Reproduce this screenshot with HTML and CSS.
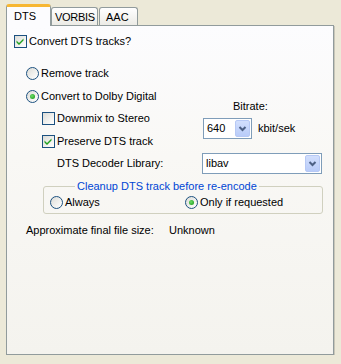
FILE: index.html
```html
<!DOCTYPE html>
<html>
<head>
<meta charset="utf-8">
<link rel="stylesheet" href="styles.css">
</head>
<body>
<div class="window">
  <div class="tabs">
    <div class="tab active">DTS</div>
    <div class="tab tab-narrow">VORBIS</div>
    <div class="tab">AAC</div>
  </div>
  <div class="panel">
    <div class="row r-convert"><span class="cb"><svg viewBox="0 0 11 11" width="11" height="11"><path d="M1.5 4.5 L4 7 L8.5 2.5 L8.5 4.5 L4 9 L1.5 6.5 Z" fill="#21A121"/></svg></span><span>Convert DTS tracks?</span></div>
    <div class="row r-remove"><span class="rb"></span><span>Remove track</span></div>
    <div class="row r-dolby"><span class="rb on"></span><span>Convert to Dolby Digital</span></div>
    <div class="dolby-opts">
      <div class="opts-top">
        <div class="opts-left">
          <div class="row r-downmix"><span class="cb"></span><span>Downmix to Stereo</span></div>
          <div class="row r-preserve"><span class="cb"><svg viewBox="0 0 11 11" width="11" height="11"><path d="M1.5 4.5 L4 7 L8.5 2.5 L8.5 4.5 L4 9 L1.5 6.5 Z" fill="#21A121"/></svg></span><span>Preserve DTS track</span></div>
        </div>
        <div class="bitrate">
          <div class="bitrate-label">Bitrate:</div>
          <div class="bitrate-row">
            <div class="combo combo-bitrate"><span class="combo-val">640</span><span class="combo-btn"><svg viewBox="0 0 13 15" width="13" height="15"><path d="M3.5 6 L6.5 9 L9.5 6" fill="none" stroke="#4D6185" stroke-width="2"/></svg></span></div>
            <span class="unit">kbit/sek</span>
          </div>
        </div>
      </div>
      <div class="decoder-row">
        <span class="decoder-label">DTS Decoder Library:</span>
        <div class="combo combo-lib"><span class="combo-val">libav</span><span class="combo-btn"><svg viewBox="0 0 13 15" width="13" height="15"><path d="M3.5 6 L6.5 9 L9.5 6" fill="none" stroke="#4D6185" stroke-width="2"/></svg></span></div>
      </div>
      <fieldset class="group">
        <legend>Cleanup DTS track before re-encode</legend>
        <div class="group-body">
          <div class="row r-always"><span class="rb"></span><span>Always</span></div>
          <div class="row"><span class="rb on"></span><span>Only if requested</span></div>
        </div>
      </fieldset>
    </div>
    <div class="size-row"><span class="size-label">Approximate final file size:</span><span>Unknown</span></div>
  </div>
</div>
</body>
</html>
```

FILE: styles.css
```css
html, body {
  margin: 0;
  padding: 0;
  background: #ECE9D8;
}
body {
  font-family: "Liberation Sans", Arial, sans-serif;
  font-size: 11px;
  color: #000;
  line-height: 13px;
}
.window {
  padding: 4px 0 0 6px;
}
.tabs {
  display: flex;
  align-items: flex-end;
  height: 21px;
  position: relative;
  z-index: 2;
}
.tab {
  box-sizing: border-box;
  height: 18px;
  border: 1px solid #919B9C;
  border-bottom: none;
  border-radius: 3px 3px 0 0;
  background: linear-gradient(#FFFFFF, #ECEBE6);
  padding: 3px 0 0 3px;
  width: 47px;
  white-space: nowrap;
}
.tab-narrow {
  letter-spacing: -0.3px;
}
.tab + .tab + .tab {
  margin-left: 1px;
  width: 39px;
  padding-left: 6px;
}
.tab.active {
  width: 45px;
  height: 22px;
  margin-bottom: -1px;
  background: #FCFCFE;
  border-top: 3px solid #F7B733;
  border-radius: 3px 3px 0 0;
  padding: 3px 0 0 7px;
}
.panel {
  box-sizing: border-box;
  width: 328px;
  height: 330px;
  border: 1px solid #919B9C;
  background: linear-gradient(#FCFCFE 0%, #F9F8F5 40%, #F4F3EE 100%);
  box-shadow: 1px 1px 0 #C8C6B8;
  display: flex;
  flex-direction: column;
  align-items: flex-start;
}
.row {
  display: flex;
  align-items: center;
  height: 13px;
  white-space: nowrap;
}
.cb {
  box-sizing: border-box;
  width: 13px;
  height: 13px;
  border: 1px solid #1C5180;
  background: linear-gradient(135deg, #DCDCD7 0%, #F6F6F4 70%, #FFFFFF 100%);
  margin-right: 2px;
  flex: none;
  display: flex;
}
.rb {
  box-sizing: border-box;
  width: 13px;
  height: 13px;
  border: 1px solid #1C5180;
  border-radius: 50%;
  background: linear-gradient(135deg, #DCDCD7 0%, #F4F4F2 65%, #FFFFFF 100%);
  margin-right: 2px;
  flex: none;
  display: flex;
  align-items: center;
  justify-content: center;
}
.rb.on::after {
  content: "";
  width: 5px;
  height: 5px;
  border-radius: 50%;
  background: radial-gradient(circle at 40% 40%, #6EDD6A 0%, #2BA82A 70%, #1E901E 100%);
}
.r-convert {
  margin: 9px 0 0 7px;
}
.r-remove {
  margin: 19px 0 0 19px;
}
.r-dolby {
  margin: 10px 0 0 19px;
}
.dolby-opts {
  padding-left: 35px;
  display: flex;
  flex-direction: column;
  align-items: flex-start;
}
.opts-top {
  display: flex;
}
.opts-left {
  width: 161px;
}
.r-downmix {
  margin-top: 9px;
}
.r-preserve {
  margin-top: 10px;
}
.bitrate {
  margin-top: -3px;
}
.bitrate-label {
  padding-left: 30px;
}
.bitrate-row {
  display: flex;
  align-items: center;
  margin-top: 5px;
}
.combo {
  box-sizing: border-box;
  display: flex;
  align-items: center;
  height: 21px;
  border: 1px solid #7F9DB9;
  background: #FFFFFF;
  padding: 1px;
}
.combo-bitrate {
  width: 49px;
}
.combo-lib {
  width: 120px;
}
.combo-val {
  padding-left: 2px;
  flex: 1;
}
.combo-btn {
  box-sizing: border-box;
  width: 15px;
  height: 17px;
  border: 1px solid #B7C9F5;
  border-radius: 2px;
  background: linear-gradient(#D2DFFD, #B9CCF9);
  display: flex;
  align-items: center;
  justify-content: center;
}
.combo-btn svg {
  flex: none;
}
.unit {
  margin-left: 6px;
}
.decoder-row {
  display: flex;
  align-items: center;
  margin-top: 5px;
}
.decoder-label {
  width: 145px;
  padding-left: 15px;
}
.group {
  box-sizing: border-box;
  width: 280px;
  margin: 6px 0 0 1px;
  padding: 0 0 4px 6px;
  border: 1px solid #D0D0BF;
  border-radius: 3px;
  min-width: 0;
}
.group legend {
  color: #0046D5;
  padding: 0 2px;
  margin-left: 25px;
  line-height: 13px;
}
.group-body {
  display: flex;
  margin-top: 3px;
}
.r-always {
  width: 135px;
}
.size-row {
  display: flex;
  margin: 10px 0 0 19px;
  white-space: nowrap;
}
.size-label {
  width: 143px;
}
```
